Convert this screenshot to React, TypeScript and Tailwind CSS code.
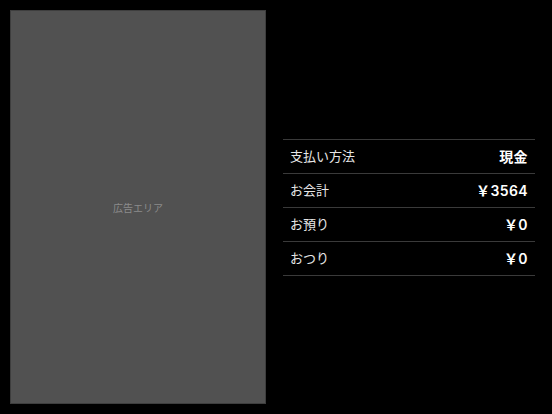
const rows = [
  { label: "支払い方法", value: "現金" },
  { label: "お会計", value: "￥3564" },
  { label: "お預り", value: "￥0" },
  { label: "おつり", value: "￥0" },
];

export default function App() {
  return (
    <div
      className="flex h-[414px] w-[552px] bg-black p-[10px]"
      style={{ fontFamily: '"Noto Sans CJK JP", "Noto Sans", sans-serif' }}
    >
      <div className="flex h-[394px] w-[256px] shrink-0 items-center justify-center border border-[#3e3e3e] bg-[#515151]">
        <span className="text-[10px] text-[#8c8c8c]">広告エリア</span>
      </div>
      <div className="flex flex-1 items-center pl-[17px] pr-[7px]">
        <div className="w-full border-t border-[#3a3a3a]">
          {rows.map(row => (
            <div
              key={row.label}
              className="flex h-[34px] items-center justify-between border-b border-[#3a3a3a] px-[7px]"
            >
              <span className="text-[13px] text-[#e6e6e6]">{row.label}</span>
              <span
                className="text-[14px] font-semibold tracking-[0.4px] text-white"
                style={{ fontFamily: 'Inter, "Noto Sans CJK JP", sans-serif' }}
              >
                {row.value}
              </span>
            </div>
          ))}
        </div>
      </div>
    </div>
  );
}
